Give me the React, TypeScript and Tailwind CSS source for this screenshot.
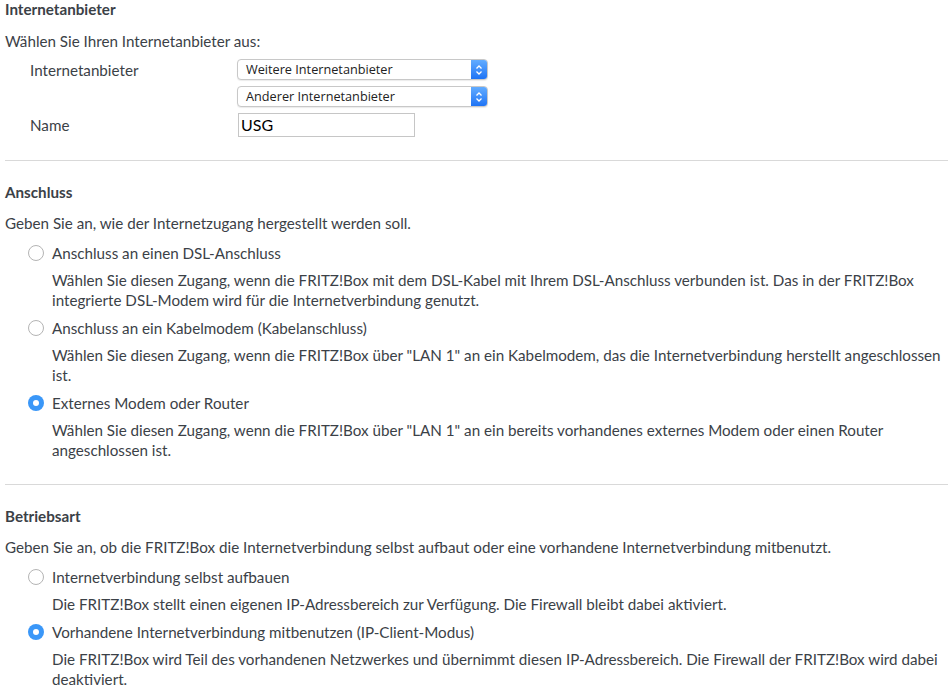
import React from "react";

type Option = {
  label: string;
  lines: string[];
  checked?: boolean;
};

const anschlussOptions: Option[] = [
  {
    label: "Anschluss an einen DSL-Anschluss",
    lines: [
      "Wählen Sie diesen Zugang, wenn die FRITZ!Box mit dem DSL-Kabel mit Ihrem DSL-Anschluss verbunden ist. Das in der FRITZ!Box",
      "integrierte DSL-Modem wird für die Internetverbindung genutzt.",
    ],
  },
  {
    label: "Anschluss an ein Kabelmodem (Kabelanschluss)",
    lines: [
      'Wählen Sie diesen Zugang, wenn die FRITZ!Box über "LAN 1" an ein Kabelmodem, das die Internetverbindung herstellt angeschlossen',
      "ist.",
    ],
  },
  {
    label: "Externes Modem oder Router",
    checked: true,
    lines: [
      'Wählen Sie diesen Zugang, wenn die FRITZ!Box über "LAN 1" an ein bereits vorhandenes externes Modem oder einen Router',
      "angeschlossen ist.",
    ],
  },
];

const betriebsartOptions: Option[] = [
  {
    label: "Internetverbindung selbst aufbauen",
    lines: ["Die FRITZ!Box stellt einen eigenen IP-Adressbereich zur Verfügung. Die Firewall bleibt dabei aktiviert."],
  },
  {
    label: "Vorhandene Internetverbindung mitbenutzen (IP-Client-Modus)",
    checked: true,
    lines: [
      "Die FRITZ!Box wird Teil des vorhandenen Netzwerkes und übernimmt diesen IP-Adressbereich. Die Firewall der FRITZ!Box wird dabei",
      "deaktiviert.",
    ],
  },
];

function Radio({ checked }: { checked?: boolean }) {
  if (checked) {
    return (
      <span className="flex items-center justify-center w-4 h-4 rounded-full bg-[#3a97f8]">
        <span className="w-[6px] h-[6px] rounded-full bg-white" />
      </span>
    );
  }
  return <span className="block w-4 h-4 rounded-full border border-[#b4b4b4] bg-white" />;
}

function SelectBox({ value }: { value: string }) {
  return (
    <div className="flex w-[251px] h-[21px] rounded-[4px] border border-[#c8c8c8] bg-white overflow-hidden shadow-[0_1px_1px_rgba(0,0,0,0.08)]">
      <span className="flex-1 pl-[8px] text-[12.7px] leading-[19px] text-[#222] font-['Open_Sans',sans-serif]">{value}</span>
      <span className="flex items-center justify-center w-[16px] bg-gradient-to-b from-[#62acff] to-[#1d73f5]">
        <svg width="8" height="12" viewBox="0 0 8 12" fill="none" stroke="white" strokeWidth="1.3">
          <path d="M1.5 4.5 L4 2 L6.5 4.5" />
          <path d="M1.5 7.5 L4 10 L6.5 7.5" />
        </svg>
      </span>
    </div>
  );
}

function OptionList({ options }: { options: Option[] }) {
  return (
    <div className="flex flex-col pt-[2px]">
      {options.map((o) => (
        <div key={o.label} className="mt-[8px]">
          <label className="flex items-center h-5 pl-[23px]">
            <Radio checked={o.checked} />
            <span className="ml-[8px]">{o.label}</span>
          </label>
          <div className="mt-[7px] pl-[47px] whitespace-nowrap">
            {o.lines.map((l) => (
              <div key={l} className="h-5">
                {l}
              </div>
            ))}
          </div>
        </div>
      ))}
    </div>
  );
}

export default function App() {
  return (
    <div className="bg-white w-[948px] h-[694px] pl-[5px] text-[#3b4147] text-[15.2px] leading-5 font-['Lato',sans-serif] overflow-hidden">
      <h2 className="font-bold leading-[18px]">Internetanbieter</h2>
      <p className="mt-[13px]">Wählen Sie Ihren Internetanbieter aus:</p>

      <div className="mt-[8px] grid grid-cols-[207px_auto] gap-y-[6px] pl-[25px] items-center">
        <span>Internetanbieter</span>
        <SelectBox value="Weitere Internetanbieter" />
        <span />
        <SelectBox value="Anderer Internetanbieter" />
        <span>Name</span>
        <div className="ml-[1px] w-[177px] h-[24px] border border-[#c6c6c6] bg-white pl-[2px] text-[16px] leading-[22px] text-black">
          USG
        </div>
      </div>

      <hr className="mt-[23px] border-t border-[#d9d9d9]" />

      <h2 className="mt-[22px] font-bold leading-[18px]">Anschluss</h2>
      <p className="mt-[12px]">Geben Sie an, wie der Internetzugang hergestellt werden soll.</p>
      <OptionList options={anschlussOptions} />

      <hr className="mt-[24px] border-t border-[#d9d9d9]" />

      <h2 className="mt-[22px] font-bold leading-[18px]">Betriebsart</h2>
      <p className="mt-[12px]">
        Geben Sie an, ob die FRITZ!Box die Internetverbindung selbst aufbaut oder eine vorhandene Internetverbindung mitbenutzt.
      </p>
      <OptionList options={betriebsartOptions} />
    </div>
  );
}
